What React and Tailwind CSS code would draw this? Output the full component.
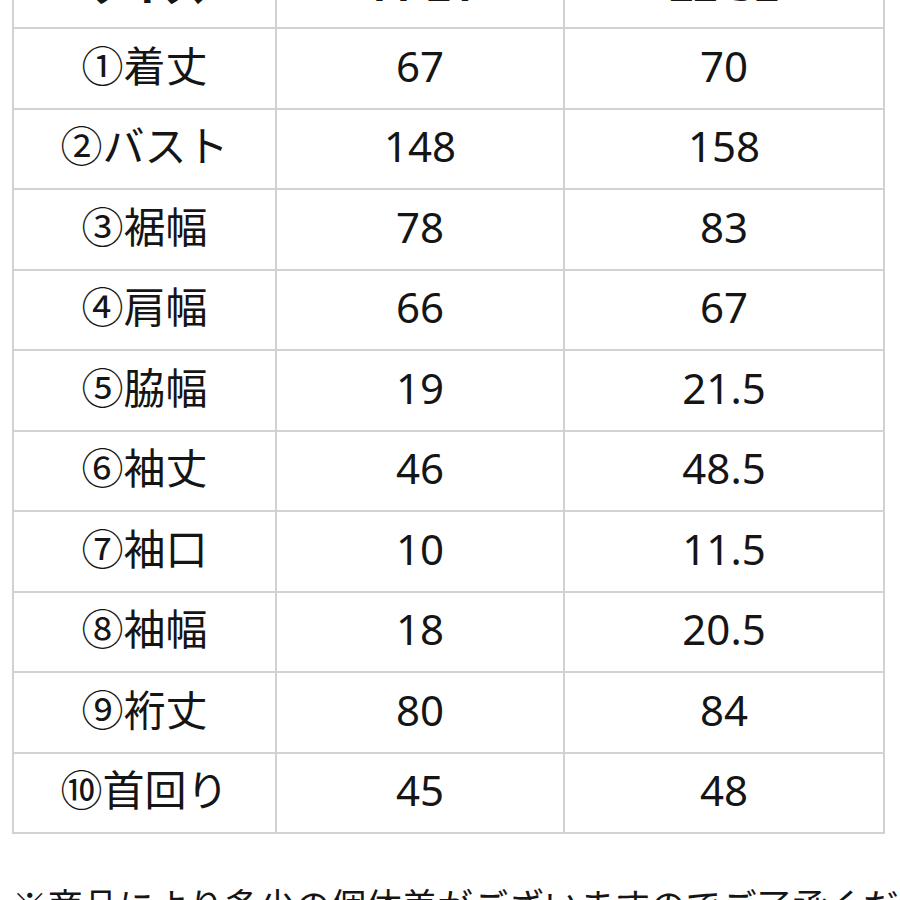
import React from 'react';

const rows = [
  ['①着丈', '67', '70'],
  ['②バスト', '148', '158'],
  ['③裾幅', '78', '83'],
  ['④肩幅', '66', '67'],
  ['⑤脇幅', '19', '21.5'],
  ['⑥袖丈', '46', '48.5'],
  ['⑦袖口', '10', '11.5'],
  ['⑧袖幅', '18', '20.5'],
  ['⑨裄丈', '80', '84'],
  ['⑩首回り', '45', '48'],
];

function Cell({ children, bold }) {
  return (
    <div
      className={
        'flex items-center justify-center pb-[5px] border-r-2 border-b-2 border-[#d2d2d2] text-[42px] leading-none text-[#151515] ' +
        (bold ? 'font-bold' : 'font-normal')
      }
    >
      {children}
    </div>
  );
}

export default function App() {
  return (
    <div className="w-[900px] h-[900px] overflow-hidden bg-white font-['Noto_Sans','Noto_Sans_CJK_JP',sans-serif]">
      <div className="ml-[12px] mt-[-53.5px] w-[871px] grid grid-cols-[263px_288px_320px] auto-rows-[80.5px] border-l-2 border-t-2 border-[#d2d2d2]">
        <Cell bold>サイズ</Cell>
        <Cell bold>11-21</Cell>
        <Cell bold>22-32</Cell>
        {rows.map((r) => (
          <React.Fragment key={r[0]}>
            <Cell>{r[0]}</Cell>
            <Cell>{r[1]}</Cell>
            <Cell>{r[2]}</Cell>
          </React.Fragment>
        ))}
      </div>
      <p className="mt-[43px] ml-[12px] whitespace-nowrap text-[35.5px] leading-normal text-[#151515] font-['Noto_Sans_CJK_JP',sans-serif]">
        ※商品により多少の個体差がございますのでご了承ください。
      </p>
    </div>
  );
}
